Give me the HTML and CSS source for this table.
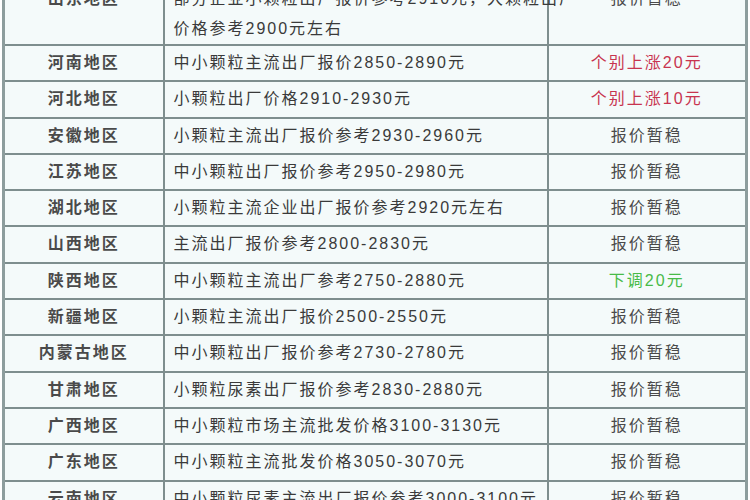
FILE: index.html
```html
<!DOCTYPE html>
<html lang="zh-CN">
<head>
<meta charset="utf-8">
<title>尿素价格</title>
<link rel="stylesheet" href="styles.css">
</head>
<body>
<div class="page">
<table class="price">
<colgroup><col class="c1"><col class="c2"><col class="c3"></colgroup>
<tbody>
<tr class="tall">
<td class="area">山东地区</td>
<td class="desc"><div class="multi">中小颗粒主流出厂报价2880-2920元左右，<br>部分企业小颗粒出厂报价参考2910元，大颗粒出厂<br>价格参考2900元左右</div></td>
<td class="trend">报价暂稳</td>
</tr>
<tr><td class="area">河南地区</td><td class="desc">中小颗粒主流出厂报价2850-2890元</td><td class="trend up">个别上涨20元</td></tr>
<tr><td class="area">河北地区</td><td class="desc">小颗粒出厂价格2910-2930元</td><td class="trend up">个别上涨10元</td></tr>
<tr><td class="area">安徽地区</td><td class="desc">小颗粒主流出厂报价参考2930-2960元</td><td class="trend">报价暂稳</td></tr>
<tr><td class="area">江苏地区</td><td class="desc">中小颗粒出厂报价参考2950-2980元</td><td class="trend">报价暂稳</td></tr>
<tr><td class="area">湖北地区</td><td class="desc">小颗粒主流企业出厂报价参考2920元左右</td><td class="trend">报价暂稳</td></tr>
<tr><td class="area">山西地区</td><td class="desc">主流出厂报价参考2800-2830元</td><td class="trend">报价暂稳</td></tr>
<tr><td class="area">陕西地区</td><td class="desc">中小颗粒主流出厂参考2750-2880元</td><td class="trend down">下调20元</td></tr>
<tr><td class="area">新疆地区</td><td class="desc">小颗粒主流出厂报价2500-2550元</td><td class="trend">报价暂稳</td></tr>
<tr><td class="area">内蒙古地区</td><td class="desc">中小颗粒出厂报价参考2730-2780元</td><td class="trend">报价暂稳</td></tr>
<tr><td class="area">甘肃地区</td><td class="desc">小颗粒尿素出厂报价参考2830-2880元</td><td class="trend">报价暂稳</td></tr>
<tr><td class="area">广西地区</td><td class="desc">中小颗粒市场主流批发价格3100-3130元</td><td class="trend">报价暂稳</td></tr>
<tr><td class="area">广东地区</td><td class="desc">中小颗粒主流批发价格3050-3070元</td><td class="trend">报价暂稳</td></tr>
<tr><td class="area">云南地区</td><td class="desc">中小颗粒尿素主流出厂报价参考3000-3100元</td><td class="trend">报价暂稳</td></tr>
</tbody>
</table>
</div>
</body>
</html>
```

FILE: styles.css
```css
html, body {
  margin: 0;
  padding: 0;
  background: #ffffff;
}

body {
  width: 750px;
  height: 500px;
  overflow: hidden;
  font-family: "Liberation Sans", "Noto Sans CJK SC", sans-serif;
}

.page {
  padding-left: 2px;
  margin-top: -48px;
}

.price {
  border-collapse: collapse;
  width: 746px;
  table-layout: fixed;
  background: #f4fafa;
  border-left: 3px solid #8d9d9d;
  border-right: 3px solid #8d9d9d;
}

.c1 { width: 160px; }
.c2 { width: 384px; }
.c3 { width: 199px; }

.price td {
  border: 2px solid #7e8e8e;
  padding: 0;
  height: 34.3px;
  line-height: 34.3px;
  font-size: 16px;
  letter-spacing: 2px;
  color: #3a3a3a;
  white-space: nowrap;
}

.price td.area {
  text-align: center;
  font-weight: bold;
  color: #4a4a4a;
}

.price td.desc {
  text-align: left;
  padding-left: 9px;
}

.price td.trend {
  text-align: center;
  color: #4a4a4a;
}

.price td.up {
  color: #c8344f;
}

.price td.down {
  color: #48bb48;
}

.multi {
  line-height: 30px;
  padding: 0;
}
```
